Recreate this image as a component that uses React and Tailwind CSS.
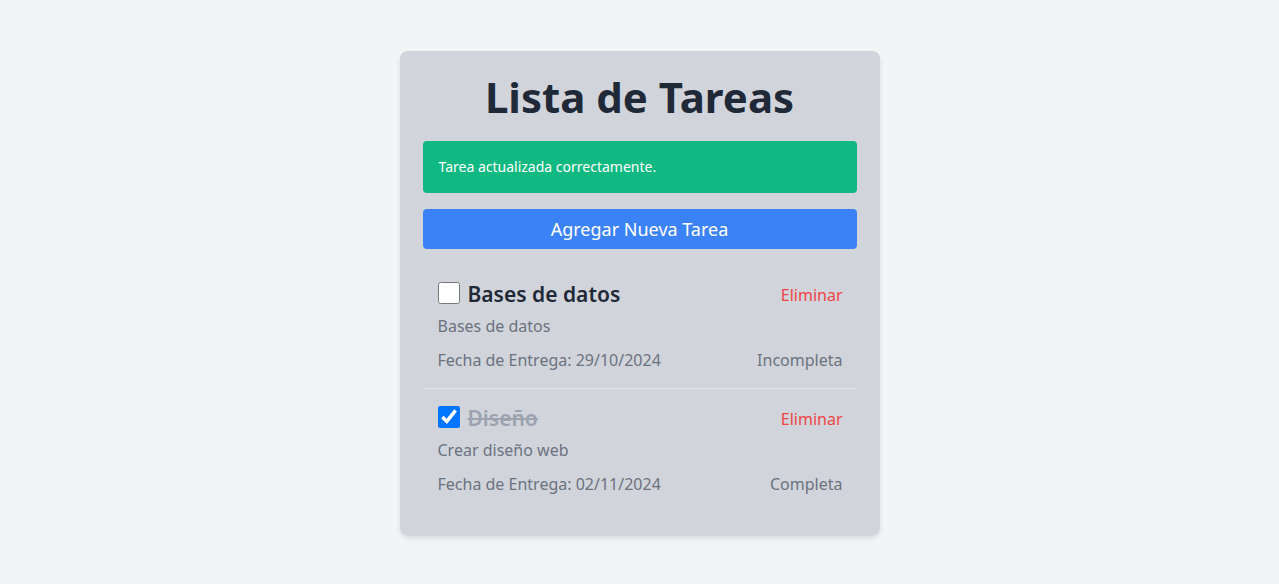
import React, { useState } from 'react';

const initialTasks = [
    { id: 1, title: 'Bases de datos', description: 'Bases de datos', dueDate: '29/10/2024', done: false },
    { id: 2, title: 'Diseño', description: 'Crear diseño web', dueDate: '02/11/2024', done: true },
];

const TaskItem = ({ task, onToggle, onDelete, last }) => (
    <li className={`pl-[15px] pr-[14px] pt-4 pb-4 ${last ? '' : 'border-b border-[#e5e7eb]'}`}>
        <div className="flex items-center justify-between h-7">
            <div className="flex items-center">
                <input
                    type="checkbox"
                    checked={task.done}
                    onChange={() => onToggle(task.id)}
                    className="w-[22px] h-[22px] mr-2 m-0 -mt-[4px]"
                />
                <span className={`text-[21px] font-semibold ${task.done ? 'line-through text-[#9ca3af]' : 'text-[#1f2937]'}`}>
                    {task.title}
                </span>
            </div>
            <button onClick={() => onDelete(task.id)} className="text-[#ef4444] text-base">
                Eliminar
            </button>
        </div>
        <p className="mt-[5px] text-[#6b7280]">{task.description}</p>
        <div className="mt-[10px] flex items-center justify-between text-[#6b7280]">
            <span>Fecha de Entrega: {task.dueDate}</span>
            <span>{task.done ? 'Completa' : 'Incompleta'}</span>
        </div>
    </li>
);

export default function App() {
    const [tasks, setTasks] = useState(initialTasks);

    const toggleTask = (id) =>
        setTasks((prev) => prev.map((t) => (t.id === id ? { ...t, done: !t.done } : t)));

    const deleteTask = (id) => setTasks((prev) => prev.filter((t) => t.id !== id));

    return (
        <div
            className="min-h-screen bg-[#f3f4f6] pt-[51px]"
            style={{ fontFamily: '"Segoe UI", "Noto Sans", "Open Sans", sans-serif' }}
        >
            <div className="mx-auto w-[480px] bg-[#d1d5db] rounded-lg shadow-md px-[23px] pt-6 pb-[23px]">
                <h1 className="text-[42px] font-bold text-[#1f2937] text-center leading-[44px] mb-[22px]">
                    Lista de Tareas
                </h1>

                {/* Status message */}
                <div className="bg-[#10b981] text-white text-sm rounded p-4">
                    Tarea actualizada correctamente.
                </div>

                <button className="mt-4 w-full h-10 bg-[#3b82f6] text-white text-lg rounded">
                    Agregar Nueva Tarea
                </button>

                <ul className="mt-4">
                    {tasks.map((task, i) => (
                        <TaskItem
                            key={task.id}
                            task={task}
                            onToggle={toggleTask}
                            onDelete={deleteTask}
                            last={i === tasks.length - 1}
                        />
                    ))}
                </ul>
            </div>
        </div>
    );
}
